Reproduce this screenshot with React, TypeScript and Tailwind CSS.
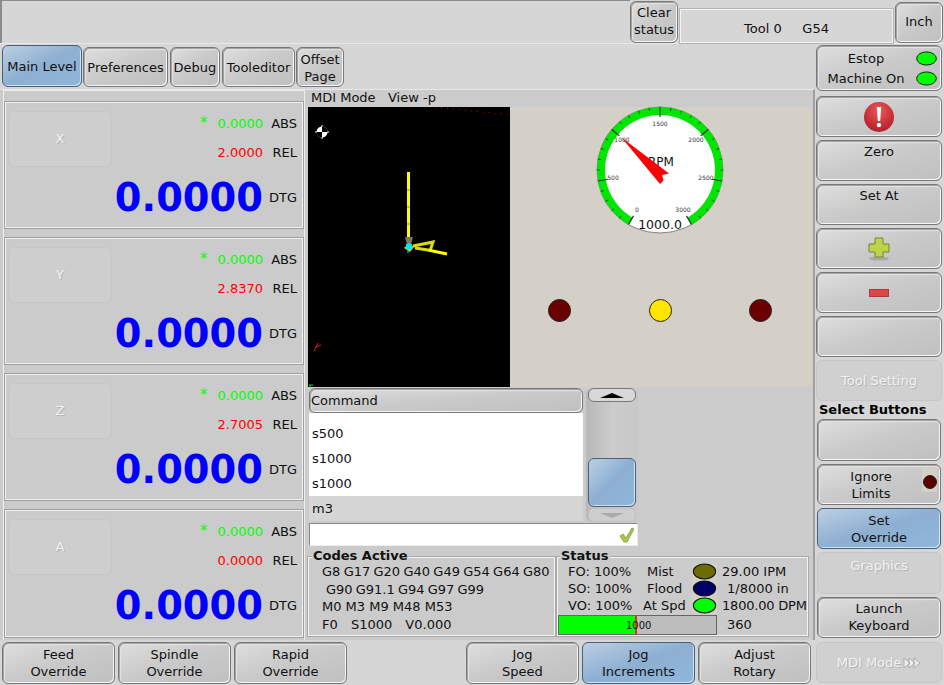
import type { ReactNode } from 'react';

const BTN = 'rounded-[6px] border border-[#787878] bg-gradient-to-br from-[#dedede] via-[#c9c9c9] to-[#c0c0c0] shadow-[inset_-1px_-1px_0_#f6f6f6,inset_1px_1px_0_#a4a4a4,inset_2px_2px_1px_#e4e4e4] text-[#111] text-center leading-[17px]';
const BLUE = 'rounded-[6px] border border-[#4a607c] bg-gradient-to-br from-[#bccfe2] via-[#8dafd2] to-[#8fb7da] shadow-[inset_-1px_-1px_0_#c8e6f4] text-[#111] text-center leading-[17px]';
const OFF = 'rounded-[6px] border border-[#c6c6c6] bg-[#d0d0d0] text-[#f2f2f2] text-center leading-[17px] [text-shadow:1px_1px_0_#b4b4b4]';

function Btn({ className, kind = BTN, children }: { className: string; kind?: string; children?: ReactNode }) {
  return <div className={`${kind} ${className} flex flex-col items-center justify-center shrink-0`}>{children}</div>;
}

function Led({ color, className = 'w-[23px] h-[15px]' }: { color: string; className?: string }) {
  return (
    <svg viewBox="0 0 23 16" className={`${className} shrink-0`}>
      <ellipse cx="11.5" cy="8" rx="10.5" ry="7" fill={color} stroke="#111" strokeWidth="1" />
    </svg>
  );
}

function RoundLed({ color }: { color: string }) {
  return <div className="w-[23px] h-[23px] rounded-full border border-[#222]" style={{ background: color }} />;
}

const AXES = [
  { name: 'X', rel: '2.0000' },
  { name: 'Y', rel: '2.8370' },
  { name: 'Z', rel: '2.7005' },
  { name: 'A', rel: '0.0000' },
];

function Dro({ name, rel, tall }: { name: string; rel: string; tall?: boolean }) {
  return (
    <div className={`border border-[#f0f0f0] shadow-[0_0_0_1px_#a0a0a0] ${tall ? 'h-[127px]' : 'h-[126px]'} flex pl-[2px] pr-[5px]`}>
      <div className="mt-[8px] w-[104px] h-[56px] rounded-[6px] border border-[#c6c6c6] bg-[#cecece] flex items-center justify-center text-[#f2f2f2] [text-shadow:1px_1px_0_#b4b4b4] shrink-0">
        {name}
      </div>
      <div className="flex-1 flex flex-col items-end">
        <div className="mt-[12px] h-[17px] flex items-center">
          <span className="text-[#00ff00] text-[15px] mr-[10px]">*</span>
          <span className="text-[#00ff00]">0.0000</span>
          <span className="ml-[6px] w-[28px] text-right">ABS</span>
        </div>
        <div className="mt-[12px] h-[17px] flex items-center">
          <span className="text-[#ff0000]">{rel}</span>
          <span className="ml-[8px] w-[26px] text-right">REL</span>
        </div>
        <div className="mt-[15px] h-[44px] flex items-center">
          <span className="text-[38.4px] font-bold text-[#0000ff] leading-none">0.0000</span>
          <span className="ml-[6px] w-[28px] text-right">DTG</span>
        </div>
      </div>
    </div>
  );
}

function Backplot() {
  return (
    <svg viewBox="0 0 202 280" className="w-[202px] h-[280px] bg-black shrink-0">
      <path d="M127 0 L202 8" stroke="#ff0000" strokeWidth="1" strokeDasharray="1 5" opacity="0.8" />
      <path d="M14 18 V32 M7 25 H21" stroke="#fff" strokeWidth="1" />
      <circle cx="14" cy="25" r="5.5" fill="#fff" />
      <path d="M14 19.5 A5.5 5.5 0 0 1 19.5 25 H14Z M14 30.5 A5.5 5.5 0 0 1 8.5 25 H14Z" fill="#000" />
      <path d="M100.5 65 V131" stroke="#ffff00" strokeWidth="3" />
      <path d="M99 83 H102 M99 100 H102 M99 117 H102" stroke="#b8b800" strokeWidth="1.5" />
      <path d="M105 139 L125 135 L122 144 M107 141 L120 143" stroke="#dcdc00" strokeWidth="3" fill="none" />
      <path d="M120 143 L139 147" stroke="#ffff00" strokeWidth="3" fill="none" />
      <path d="M97 130 H105 L103 138 H99Z" fill="#77775a" />
      <path d="M96 141 L101 136 L106 140 L102 145 Z" fill="#c8c820" />
      <rect x="98" y="137" width="6" height="5" fill="#00e6e6" />
      <path d="M100 142 V146" stroke="#00e6e6" strokeWidth="1" />
      <path d="M8 240 L10 236 M8 240 L13 238 M8 240 L6 244" stroke="#e01818" strokeWidth="1" />
      <path d="M1 278 H5 M1 279 H3" stroke="#20d020" strokeWidth="1" />
    </svg>
  );
}

function Gauge() {
  const ticks = Array.from({ length: 31 }, (_, i) => i);
  const rad = (a: number) => ((a - 90) * Math.PI) / 180;
  const labels = [
    ['0', -23, 42], ['500', -47, 10], ['1000', -38, -28], ['1500', 0, -44],
    ['2000', 36, -28], ['2500', 46, 10], ['3000', 23, 42],
  ] as const;
  return (
    <svg viewBox="0 0 130 130" className="w-[130px] h-[130px]">
      <circle cx="65" cy="65" r="63" fill="#fff" stroke="#666" strokeWidth="0.8" />
      <path
        d={`M${65 + 59 * Math.cos(rad(-150))} ${65 + 59 * Math.sin(rad(-150))} A59 59 0 1 1 ${65 + 59 * Math.cos(rad(150))} ${65 + 59 * Math.sin(rad(150))}`}
        fill="none" stroke="#00e600" strokeWidth="8"
      />
      {ticks.map((i) => {
        const a = rad(-150 + i * 10);
        const major = i % 5 === 0;
        const inner = major ? 53 : 60;
        return (
          <line key={i} x1={65 + inner * Math.cos(a)} y1={65 + inner * Math.sin(a)} x2={65 + 63 * Math.cos(a)} y2={65 + 63 * Math.sin(a)}
            stroke="#222" strokeWidth={major ? 1.1 : 0.8} />
        );
      })}
      {labels.map(([t, dx, dy]) => (
        <text key={t} x={65 + dx} y={65 + dy} textAnchor="middle" fontSize="6" fill="#333" fontFamily="DejaVu Sans">{t}</text>
      ))}
      <text x="66" y="61" textAnchor="middle" fontSize="12" fill="#111" fontFamily="DejaVu Sans">RPM</text>
      <polygon points="26.5,32.5 74,68.5 67,70 68.5,75.5 65,79" fill="#ff0000" />
      <text x="65" y="124" textAnchor="middle" fontSize="12.5" fill="#111" fontFamily="DejaVu Sans">1000.0</text>
    </svg>
  );
}

function Alert() {
  return (
    <svg viewBox="0 0 32 32" className="w-[32px] h-[32px]">
      <defs>
        <radialGradient id="redBall" cx="50%" cy="30%" r="75%">
          <stop offset="0%" stopColor="#e95a5a" />
          <stop offset="70%" stopColor="#c42a32" />
          <stop offset="100%" stopColor="#a81f38" />
        </radialGradient>
      </defs>
      <circle cx="16" cy="16" r="15" fill="url(#redBall)" />
      <path d="M13.8 6 H18.2 L17.2 20 H14.8Z" fill="#fff" />
      <circle cx="16" cy="24" r="2.2" fill="#fff" />
    </svg>
  );
}

function Plus() {
  return (
    <svg viewBox="0 0 22 24" className="w-[22px] h-[24px]">
      <ellipse cx="11" cy="21.5" rx="10" ry="2" fill="#a8a8a8" />
      <path d="M7 1 H15 V7 H21 V15 H15 V20 H7 V15 H1 V7 H7Z" fill="#bfd24a" stroke="#6c8c28" strokeWidth="1" />
    </svg>
  );
}

function Check() {
  return (
    <svg viewBox="0 0 16 16" className="w-[16px] h-[16px]">
      <path d="M1 9 L4 7 L7 11 L13 1 L15 2 L8 15 L5 15Z" fill="#a8c850" stroke="#7c9a34" strokeWidth="0.8" />
    </svg>
  );
}

function Arrows() {
  return (
    <svg viewBox="0 0 18 12" className="w-[18px] h-[12px] ml-[2px] shrink-0">
      <path d="M1 1 L7 6 L1 11Z M6 1 L12 6 L6 11Z M11 1 L17 6 L11 11Z" fill="#ececec" stroke="#a2a2a2" strokeWidth="0.8" />
    </svg>
  );
}

function Frame({ title, className, titleLeft, children }: { title: string; className: string; titleLeft: string; children: ReactNode }) {
  return (
    <div className={`relative border border-[#f4f4f4] shadow-[0_0_0_1px_#a8a8a8] ${className}`}>
      <span className={`absolute -top-[11px] ${titleLeft} font-bold bg-[#cbcbcb] px-[1px] leading-[17px] text-[#111]`}>{title}</span>
      {children}
    </div>
  );
}

const BOTTOM_LEFT = [['Feed', 'Override'], ['Spindle', 'Override'], ['Rapid', 'Override']];
const STATUS_LED = 'w-[25px] h-[17px] -mx-[1px] bg-[#d4d0c8]';

export default function App() {
  return (
    <div className="w-[944px] h-[685px] bg-[#d6d6d6] overflow-hidden flex flex-col text-[13px] text-[#111] [font-family:'DejaVu_Sans',sans-serif]">
      <div className="h-[44px] flex items-start shrink-0 border-b border-[#e8e8e8]">
        <div className="w-[630px] h-[43px] border-l-2 border-t border-[#8c8c8c] border-r-0" />
        <Btn className="w-[48px] h-[42px] mt-px pb-[2px]">
          <span>Clear</span>
          <span>status</span>
        </Btn>
        <div className="ml-[2px] mt-[9px] w-[213px] h-[34px] border border-[#f2f2f2] shadow-[0_0_0_1px_#b4b4b4] flex items-end justify-center pb-[5px] whitespace-pre leading-[17px]">
          Tool 0     G54
        </div>
        <Btn className="w-[48px] h-[41px] ml-[2px] mt-[2px] pb-[2px]">Inch</Btn>
      </div>

      <div className="flex-1 flex min-h-0">
        <div className="w-[815px] flex flex-col shrink-0">
          <div className="h-[45px] flex items-start pl-[2px] pt-[1px] shrink-0">
            <Btn kind={BLUE} className="w-[80px] h-[42px]">Main Level</Btn>
            <Btn className="w-[85px] h-[40px] mt-[2px] ml-[1px]">Preferences</Btn>
            <Btn className="w-[50px] h-[40px] mt-[2px] ml-[2px]">Debug</Btn>
            <Btn className="w-[73px] h-[40px] mt-[2px] ml-[2px]">Tooleditor</Btn>
            <Btn className="w-[48px] h-[40px] mt-[2px] ml-[1px] pt-[2px]">
              <span>Offset</span>
              <span>Page</span>
            </Btn>
          </div>

          <div className="h-[551px] bg-[#cbcbcb] flex border-t border-[#e8e8e8] border-r-2 border-r-[#a0a0a0] shrink-0">
            <div className="w-[305px] pl-[5px] pr-[2px] pt-[12px] flex flex-col gap-[10px] shrink-0 relative">
              <div className="absolute left-[3px] right-0 top-0 bottom-0 border-x border-t border-[#eeeeee]" />
              {AXES.map((a, i) => (
                <Dro key={a.name} name={a.name} rel={a.rel} tall={i === 3} />
              ))}
            </div>

            <div className="flex-1 flex flex-col pl-[3px]">
              <div className="h-[17px] pl-[3px] leading-[15px] whitespace-pre">MDI Mode   View -p</div>
              <div className="h-[280px] flex shrink-0 pr-[1px]">
                <Backplot />
                <div className="flex-1 bg-[#d4d0c8] flex flex-col items-center pr-[2px]">
                  <div className="mt-[-2px] h-[130px]">
                    <Gauge />
                  </div>
                  <div className="mt-[64px] w-[224px] flex justify-between">
                    <RoundLed color="#6b0000" />
                    <RoundLed color="#ffe600" />
                    <RoundLed color="#6b0000" />
                  </div>
                </div>
              </div>

              <div className="flex pl-[1px] h-[135px] mt-[1px] shrink-0">
                <div className="w-[274px] flex flex-col shrink-0">
                  <Btn kind={`${BTN} !items-start`} className="w-[274px] h-[25px] pl-[1px]">Command</Btn>
                  <div className="h-[83px] bg-white pt-[8px] flex flex-col">
                    <div className="h-[25px] pl-[3px] leading-[25px]">s500</div>
                    <div className="h-[25px] pl-[3px] leading-[25px]">s1000</div>
                    <div className="h-[25px] pl-[3px] leading-[25px]">s1000</div>
                  </div>
                  <div className="h-[25px] pl-[3px] leading-[25px] bg-[#d6d6d6]">m3</div>
                </div>
                <div className="ml-[3px] w-[52px] h-[134px] bg-gradient-to-r from-[#b8b8b8] via-[#cccccc] to-[#c8c8c8] rounded-[6px] flex flex-col items-center shrink-0">
                  <div className="w-[48px] h-[14px] rounded-[6px] border border-[#777] bg-[#d8d8d8] flex items-center justify-center">
                    <div className="w-0 h-0 border-x-[12px] border-x-transparent border-b-[5px] border-b-black" />
                  </div>
                  <div className={`${BLUE} w-[48px] h-[49px] mt-[56px]`} />
                  <div className="w-[48px] h-[14px] mt-[1px] rounded-[6px] border border-[#c0c0c0] bg-[#cecece] flex items-center justify-center">
                    <div className="w-0 h-0 border-x-[12px] border-x-transparent border-t-[5px] border-t-[#aaaaaa]" />
                  </div>
                </div>
              </div>

              <div className="ml-[1px] w-[329px] h-[23px] bg-white border border-[#8a8a8a] border-b-[#eeeeee] border-r-[#eeeeee] flex items-center justify-end pr-[2px] shrink-0">
                <Check />
              </div>

              <div className="mt-[11px] flex gap-[2px] shrink-0 h-[79px] leading-[17.6px]">
                <Frame title="Codes Active" titleLeft="left-[3px]" className="w-[247px] h-[79px] pt-[5px] whitespace-pre">
                  <div className="pl-[13px] [word-spacing:-0.85px]">G8 G17 G20 G40 G49 G54 G64 G80</div>
                  <div className="pl-[17px] [word-spacing:-1px]">G90 G91.1 G94 G97 G99</div>
                  <div className="pl-[13px]">M0 M3 M9 M48 M53</div>
                  <div className="pl-[13px] [word-spacing:-0.85px]">F0    S1000    V0.000</div>
                </Frame>
                <Frame title="Status" titleLeft="left-[2px]" className="w-[251px] h-[79px] pt-[5px] whitespace-pre">
                  <div className="flex h-[17px] items-center">
                    <span className="w-[85px] pl-[10px] shrink-0">FO: 100%</span>
                    <span className="w-[50px] pl-[4px] shrink-0">Mist</span>
                    <Led color="#6b6b00" className={STATUS_LED} />
                    <span className="ml-[6px]">29.00 IPM</span>
                  </div>
                  <div className="flex h-[17px] items-center">
                    <span className="w-[85px] pl-[10px] shrink-0">SO: 100%</span>
                    <span className="w-[50px] pl-[4px] shrink-0">Flood</span>
                    <Led color="#000066" className={STATUS_LED} />
                    <span className="ml-[11px]">1/8000 in</span>
                  </div>
                  <div className="flex h-[17px] items-center">
                    <span className="w-[85px] pl-[10px] shrink-0">VO: 100%</span>
                    <span className="w-[50px] shrink-0">At Spd</span>
                    <Led color="#00ff00" className={STATUS_LED} />
                    <span className="ml-[6px] tracking-[-0.2px]">1800.00 DPM</span>
                  </div>
                  <div className="flex items-center mt-[1px]">
                    <div className="w-[159px] h-[20px] border border-[#666] bg-[#bdbdbd] flex relative shrink-0">
                      <div className="w-[78px] bg-[#00ff00] border-r-2 border-r-[#e03020]" />
                      <span className="absolute left-[67px] top-[1px] text-[10px] leading-[17px]">1000</span>
                    </div>
                    <span className="ml-[10px]">360</span>
                  </div>
                </Frame>
              </div>
            </div>
          </div>

          <div className="flex-1 flex pl-[2px] pt-[2px] gap-[3px]">
            {BOTTOM_LEFT.map(([a, b]) => (
              <Btn key={a} className="w-[113px] h-[42px]">
                <span>{a}</span>
                <span>{b}</span>
              </Btn>
            ))}
            <Btn className="w-[113px] h-[42px] ml-[116px]">
              <span>Jog</span>
              <span>Speed</span>
            </Btn>
            <Btn kind={BLUE} className="w-[113px] h-[42px]">
              <span>Jog</span>
              <span>Increments</span>
            </Btn>
            <Btn className="w-[113px] h-[42px]">
              <span>Adjust</span>
              <span>Rotary</span>
            </Btn>
          </div>
        </div>

        <div className="flex-1 flex flex-col pl-[1px]">
          <Btn className="w-[126px] h-[46px] mt-[1px]">
            <div className="flex w-full items-center h-[20px]">
              <span className="flex-1">Estop</span>
              <Led color="#00ff00" className="w-[23px] h-[15px] mr-[3px]" />
            </div>
            <div className="flex w-full items-center h-[20px]">
              <span className="flex-1">Machine On</span>
              <Led color="#00ff00" className="w-[23px] h-[15px] mr-[3px]" />
            </div>
          </Btn>
          <div className="flex flex-col gap-[3px] mt-[5px]">
            <Btn className="w-[126px] h-[41px]"><Alert /></Btn>
            <Btn className="w-[126px] h-[41px] !justify-start pt-[2px]">Zero</Btn>
            <Btn className="w-[126px] h-[41px] !justify-start pt-[2px]">Set At</Btn>
            <Btn className="w-[126px] h-[41px]"><Plus /></Btn>
            <Btn className="w-[126px] h-[41px]">
              <div className="w-[20px] h-[8px] bg-[#dc4848] border border-[#b03a3a]" />
            </Btn>
            <Btn className="w-[126px] h-[41px]" />
            <Btn kind={OFF} className="w-[126px] h-[41px]">Tool Setting</Btn>
          </div>
          <div className="h-[17px] pl-[3px] font-bold leading-[17px] text-[#000]">Select Buttons</div>
          <div className="flex flex-col gap-[3px] mt-[1px] pl-[1px]">
            <Btn className="w-[124px] h-[42px]" />
            <Btn className="w-[124px] h-[41px] !flex-row relative">
              <div className="flex-1 pr-[16px]">
                <div>Ignore</div>
                <div>Limits</div>
              </div>
              <div className="absolute right-[3px] top-[3px] w-[15px] h-[24px] bg-[#d4d0c8] flex items-end justify-center pb-[3px]">
                <div className="w-[14px] h-[14px] rounded-full bg-[#5c0000] border border-[#222] shrink-0" />
              </div>
            </Btn>
            <Btn kind={BLUE} className="w-[124px] h-[41px]">
              <span>Set</span>
              <span>Override</span>
            </Btn>
            <Btn kind={OFF} className="w-[124px] h-[42px] !justify-start pt-[4px]">Graphics</Btn>
            <Btn className="w-[124px] h-[41px] pb-[2px]">
              <span>Launch</span>
              <span>Keyboard</span>
            </Btn>
          </div>
          <Btn kind={OFF} className="w-[126px] h-[41px] mt-[4px] !flex-row">
            MDI Mode
            <Arrows />
          </Btn>
        </div>
      </div>
    </div>
  );
}
